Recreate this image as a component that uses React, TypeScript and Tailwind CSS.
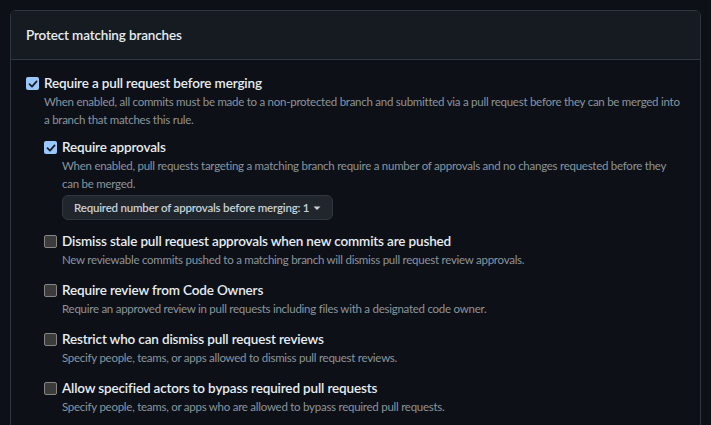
const font = { fontFamily: 'Lato, "Segoe UI", "Liberation Sans", sans-serif' }

function Box({ checked }: { checked?: boolean }) {
  if (checked) {
    return (
      <span className="mt-[4px] flex h-[13px] w-[13px] shrink-0 items-center justify-center rounded-[2px] bg-[#99c8ff]">
        <svg width="10" height="10" viewBox="0 0 10 10" fill="none">
          <path d="M1.5 5.2 L4 7.6 L8.6 2.4" stroke="#1b1f24" strokeWidth="1.8" strokeLinecap="round" strokeLinejoin="round" />
        </svg>
      </span>
    )
  }
  return <span className="mt-[4px] h-[13px] w-[13px] shrink-0 rounded-[2px] border border-[#858585] bg-[#3b3b3b]" />
}

function Option({
  checked,
  title,
  desc,
  children,
}: {
  checked?: boolean
  title: string
  desc: string
  children?: React.ReactNode
}) {
  return (
    <div className="flex gap-[5px]">
      <Box checked={checked} />
      <div className="min-w-0 flex-1">
        <div className="text-[13.5px] font-semibold leading-[20px] tracking-[-0.15px] text-[#e6edf3]">{title}</div>
        <p className="text-[11.5px] leading-[18px] tracking-[-0.26px] text-[#8b949e]">{desc}</p>
        {children}
      </div>
    </div>
  )
}

export default function App() {
  return (
    <div className="min-h-[425px] bg-[#0d1117] p-[10px] pb-0" style={font}>
      <div className="rounded-t-[6px] border border-b-0 border-[#30363d]">
        <div className="flex h-[49px] items-center border-b border-[#30363d] bg-[#161b22] px-[15px] text-[13.5px] font-semibold tracking-[-0.15px] text-[#e6edf3]">
          Protect matching branches
        </div>
        <div className="flex flex-col gap-[10px] px-[15px] pb-[12px] pt-[13px]">
          <Option
            checked
            title="Require a pull request before merging"
            desc="When enabled, all commits must be made to a non-protected branch and submitted via a pull request before they can be merged into a branch that matches this rule."
          >
            <div className="mt-[8px] flex flex-col gap-[11px] pr-[10px]">
              <Option
                checked
                title="Require approvals"
                desc="When enabled, pull requests targeting a matching branch require a number of approvals and no changes requested before they can be merged."
              >
                <button className="mt-[2px] flex h-[25px] items-center gap-[4px] rounded-[6px] border border-[#30363d] bg-[#21262d] px-[11px] text-[11.5px] font-semibold tracking-[-0.2px] text-[#c9d1d9]">
                  Required number of approvals before merging: 1
                  <svg width="8" height="8" viewBox="0 0 8 8">
                    <path d="M0.5 2.5 L4 6 L7.5 2.5 Z" fill="#c9d1d9" />
                  </svg>
                </button>
              </Option>
              <Option
                title="Dismiss stale pull request approvals when new commits are pushed"
                desc="New reviewable commits pushed to a matching branch will dismiss pull request review approvals."
              />
              <Option
                title="Require review from Code Owners"
                desc="Require an approved review in pull requests including files with a designated code owner."
              />
              <Option
                title="Restrict who can dismiss pull request reviews"
                desc="Specify people, teams, or apps allowed to dismiss pull request reviews."
              />
              <Option
                title="Allow specified actors to bypass required pull requests"
                desc="Specify people, teams, or apps who are allowed to bypass required pull requests."
              />
            </div>
          </Option>
        </div>
      </div>
    </div>
  )
}
